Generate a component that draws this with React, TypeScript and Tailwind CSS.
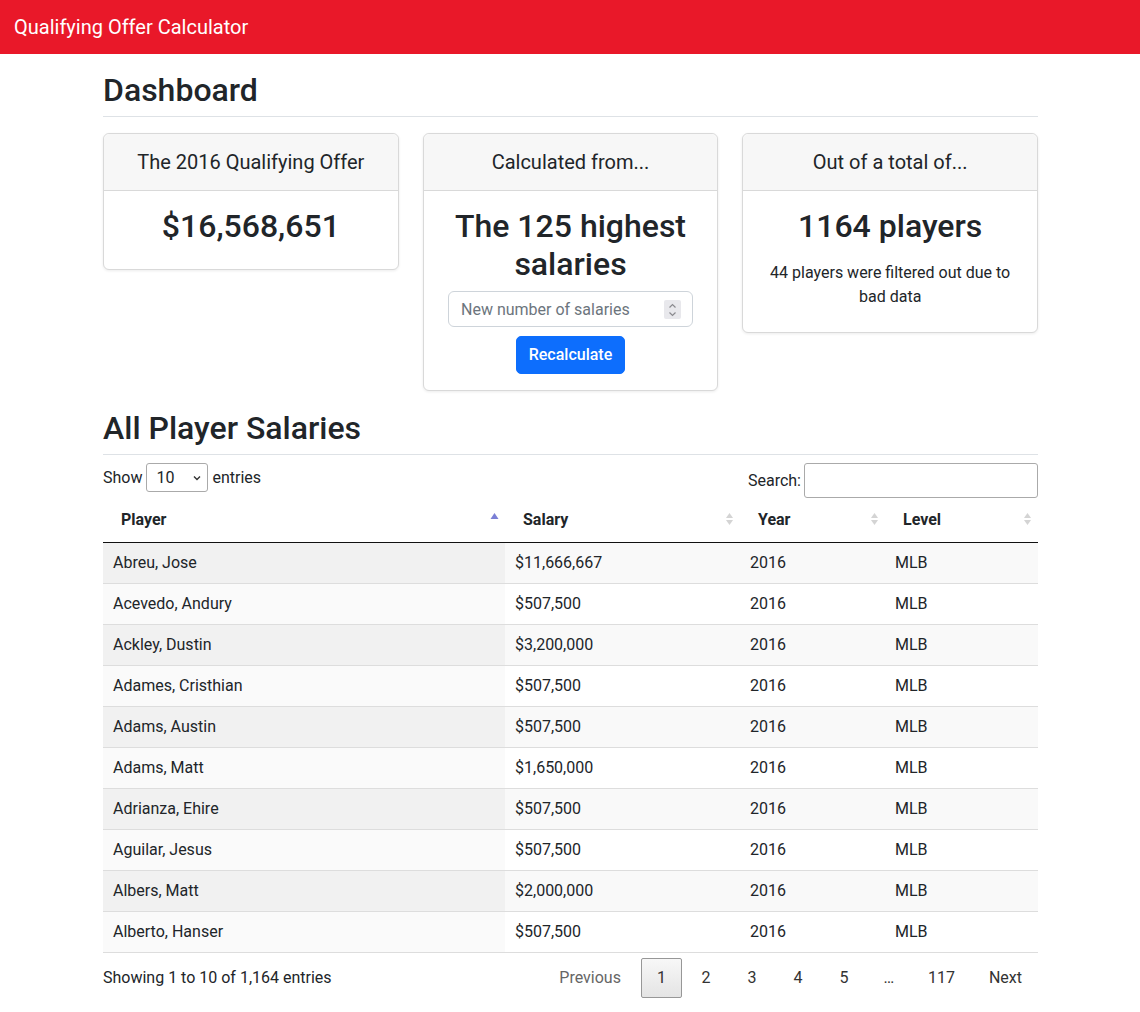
import React from 'react';

interface Row {
  name: string;
  salary: string;
}

const rows: Row[] = [
  { name: 'Abreu, Jose', salary: '$11,666,667' },
  { name: 'Acevedo, Andury', salary: '$507,500' },
  { name: 'Ackley, Dustin', salary: '$3,200,000' },
  { name: 'Adames, Cristhian', salary: '$507,500' },
  { name: 'Adams, Austin', salary: '$507,500' },
  { name: 'Adams, Matt', salary: '$1,650,000' },
  { name: 'Adrianza, Ehire', salary: '$507,500' },
  { name: 'Aguilar, Jesus', salary: '$507,500' },
  { name: 'Albers, Matt', salary: '$2,000,000' },
  { name: 'Alberto, Hanser', salary: '$507,500' },
];

// DataTables-style sort arrows
const SortIcon = ({ active }: { active?: boolean }) =>
  active ? (
    <svg width="9" height="14" viewBox="0 0 9 14" className="absolute right-[6px] top-[13px]">
      <polygon points="4.5,2 8.5,8 0.5,8" fill="#7b7fd6" />
    </svg>
  ) : (
    <svg width="9" height="14" viewBox="0 0 9 14" className="absolute right-[6px] top-[15px]">
      <polygon points="4.5,0 8,5 1,5" fill="#d4d4d4" />
      <polygon points="4.5,12 8,7 1,7" fill="#d4d4d4" />
    </svg>
  );

const Card = ({ title, children }: { title: string; children: React.ReactNode }) => (
  <div className="bg-white border border-[#d9d9d9] rounded-md shadow-[0_1px_3px_rgba(0,0,0,0.08)] self-start">
    <div className="bg-[#f7f7f7] border-b border-[#d9d9d9] rounded-t-md py-4 text-center text-[20px] leading-6">
      {title}
    </div>
    <div className="p-4 text-center">{children}</div>
  </div>
);

const App = () => {
  return (
    <div className="min-h-screen bg-white text-[#212529]" style={{ fontFamily: 'Roboto, Inter, "Noto Sans", sans-serif' }}>
      <nav className="h-[54px] bg-[#e91829] flex items-center px-[14px]">
        <span className="text-white text-[20px] leading-6">Qualifying Offer Calculator</span>
      </nav>

      <main className="w-[936px] mx-auto pl-px">
        <h2 className="mt-[17px] text-[32px] leading-[38px] font-medium pb-[7px] border-b border-[#dee2e6]">Dashboard</h2>

        <div className="grid grid-cols-3 gap-6 mt-4">
          <Card title="The 2016 Qualifying Offer">
            <h2 className="text-[32px] leading-[38px] font-medium mb-2">$16,568,651</h2>
          </Card>
          <Card title="Calculated from...">
            <h2 className="text-[32px] leading-[38px] font-medium mb-2">The 125 highest salaries</h2>
            <div className="relative w-[245px] mx-auto">
              <input
                type="number"
                placeholder="New number of salaries"
                className="w-[245px] h-[36px] border border-[#ced4da] rounded-md px-3 text-[16px] placeholder:text-[#6c757d] outline-none [appearance:textfield] [&::-webkit-inner-spin-button]:appearance-none"
              />
              <div className="absolute right-[12px] top-[9px] w-[17px] h-[19px] bg-[#e8e8ec] rounded-[2px] flex flex-col items-center justify-center gap-[2px] pointer-events-none">
                <svg width="9" height="6" viewBox="0 0 9 6">
                  <path d="M1.5 4.5 L4.5 1.5 L7.5 4.5" fill="none" stroke="#8a8a8f" strokeWidth="1.2" />
                </svg>
                <svg width="9" height="6" viewBox="0 0 9 6">
                  <path d="M1.5 1.5 L4.5 4.5 L7.5 1.5" fill="none" stroke="#8a8a8f" strokeWidth="1.2" />
                </svg>
              </div>
            </div>
            <div className="mt-[9px]">
              <button className="bg-[#0d6efd] text-white text-[16px] font-medium leading-6 px-3 py-[6px] rounded-[5px] border border-[#0d6efd]">
                Recalculate
              </button>
            </div>
          </Card>
          <Card title="Out of a total of...">
            <h2 className="text-[32px] leading-[38px] font-medium mb-4">1164 players</h2>
            <p className="text-[16px] leading-6 mb-[7px]">
              44 players were filtered out due to
              <br />
              bad data
            </p>
          </Card>
        </div>

        <h2 className="mt-[18px] text-[32px] leading-[38px] font-medium pb-[7px] border-b border-[#dee2e6]">All Player Salaries</h2>

        <div className="flex justify-between items-start mt-2 text-[16px]">
          <div className="flex items-center h-[29px]">
            <span>Show</span>
            <div className="relative mx-[4px]">
              <select className="appearance-none w-[62px] h-[29px] border border-[#aaa] rounded-[3px] pl-[9px] bg-white text-[16px]">
                <option>10</option>
              </select>
              <svg width="10" height="10" viewBox="0 0 10 10" className="absolute right-[6px] top-[10px] pointer-events-none">
                <path d="M2 3.5 L5 6.5 L8 3.5" fill="none" stroke="#333" strokeWidth="1.4" />
              </svg>
            </div>
            <span>entries</span>
          </div>
          <div className="flex items-center">
            <span>Search:</span>
            <input className="ml-[3px] w-[234px] h-[35px] border border-[#aaa] rounded-[3px] outline-none px-2" />
          </div>
        </div>

        <table className="w-full table-fixed border-collapse text-[16px]">
          <colgroup>
            <col className="w-[402px]" />
            <col className="w-[235px]" />
            <col className="w-[145px]" />
            <col />
          </colgroup>
          <thead>
            <tr className="border-b border-[#111]">
              <th className="relative text-left font-bold py-[10px] pl-[18px] leading-6">
                Player
                <SortIcon active />
              </th>
              <th className="relative text-left font-bold py-[10px] pl-[18px] leading-6">
                Salary
                <SortIcon />
              </th>
              <th className="relative text-left font-bold py-[10px] pl-[18px] leading-6">
                Year
                <SortIcon />
              </th>
              <th className="relative text-left font-bold py-[10px] pl-[18px] leading-6">
                Level
                <SortIcon />
              </th>
            </tr>
          </thead>
          <tbody>
            {rows.map((r, i) => {
              const odd = i % 2 === 0;
              return (
                <tr
                  key={r.name}
                  className={`${i > 0 ? 'border-t border-[#ddd]' : ''} ${odd ? 'bg-[#f9f9f9]' : 'bg-white'} ${i === rows.length - 1 ? 'border-b border-[#111]' : ''}`}
                >
                  <td className={`py-2 px-[10px] leading-6 ${odd ? 'bg-[#f1f1f1]' : 'bg-[#fafafa]'}`}>{r.name}</td>
                  <td className="py-2 px-[10px] leading-6">{r.salary}</td>
                  <td className="py-2 px-[10px] leading-6">2016</td>
                  <td className="py-2 px-[10px] leading-6">MLB</td>
                </tr>
              );
            })}
          </tbody>
        </table>

        <div className="flex justify-between items-center pt-[5px] text-[16px]">
          <div>Showing 1 to 10 of 1,164 entries</div>
          <div className="flex items-center">
            <span className="px-4 py-2 leading-6 text-[#666]">Previous</span>
            <span className="ml-[4px] w-[41px] h-[40px] flex items-center justify-center border border-[#979797] rounded-[2px] bg-gradient-to-b from-[#f7f7f7] to-[#e4e4e4] text-[#333]">
              1
            </span>
            {['2', '3', '4', '5'].map(n => (
              <span key={n} className="ml-[2px] w-[44px] h-[40px] flex items-center justify-center text-[#333]">
                {n}
              </span>
            ))}
            <span className="ml-[2px] w-[42px] h-[40px] flex items-center justify-center text-[#333]">…</span>
            <span className="ml-[2px] px-4 h-[40px] flex items-center text-[#333]">117</span>
            <span className="ml-[2px] px-4 h-[40px] flex items-center text-[#333]">Next</span>
          </div>
        </div>
      </main>
    </div>
  );
};

export default App;
